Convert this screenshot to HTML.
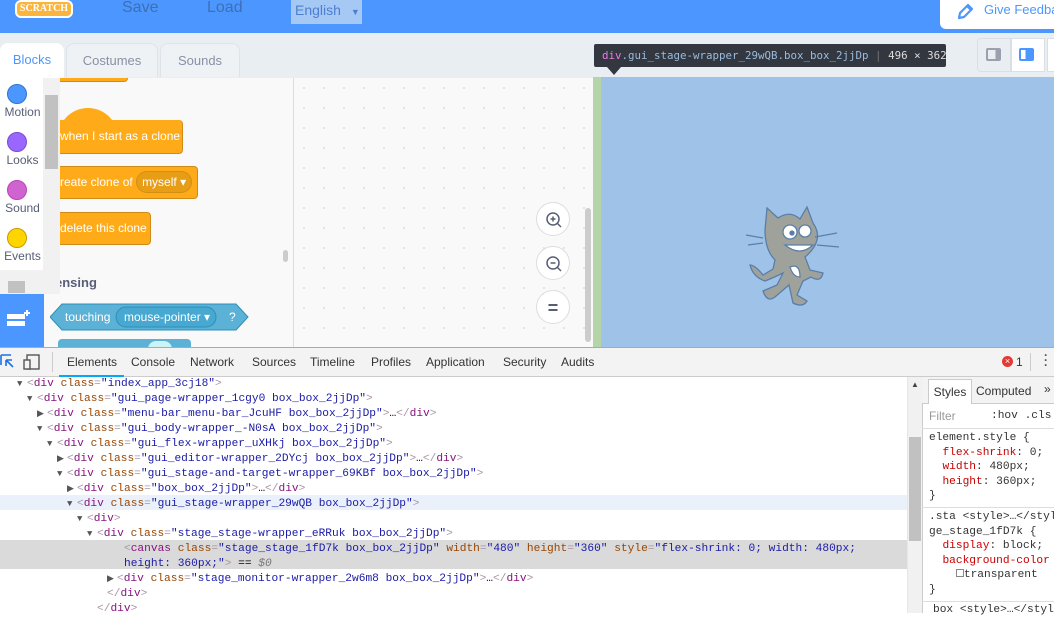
<!DOCTYPE html>
<html><head><meta charset="utf-8"><style>
*{margin:0;padding:0;box-sizing:border-box}
body{width:1054px;height:613px;overflow:hidden;position:relative;font-family:"Liberation Sans",sans-serif;background:#fff}
.a{position:absolute}
.code{font-family:"Liberation Mono",monospace;font-size:11.2px;line-height:15px;white-space:nowrap}
.t{color:#881280}.n{color:#994500}.v{color:#1a1aa6}.p{color:#a894a6}
.tri{display:inline-block;width:10px;color:#555;font-size:9px}
.blk{position:absolute;background:#ffab19;border:1px solid #cf8b17;border-radius:4px;color:#fff;font-size:12px;line-height:30px;padding-left:4px;white-space:nowrap}
.cat{position:absolute;left:7px;width:20px;height:20px;border-radius:50%}
.cl{position:absolute;left:0;width:45px;text-align:center;font-size:12px;color:#575e75}
.zb{position:absolute;left:536px;width:34px;height:34px;border-radius:50%;background:#fff;border:1px solid #ddd}
.dt{font-family:"Liberation Sans",sans-serif;font-size:12px;color:#333;position:absolute;top:355px}
</style></head><body>
<div class="a" style="left:0;top:0;width:1054px;height:33px;background:#4c97ff"></div>
<div class="a" style="left:15px;top:0;width:58px;height:18px;background:#fbb53c;border:2px solid #fff;border-radius:6px;color:#fff;font-size:10px;font-weight:bold;text-align:center;line-height:14px;font-family:'Liberation Serif',serif">SCRATCH</div>
<div class="a" style="left:122px;top:-1px;font-size:16px;color:#3d6fb5">Save</div>
<div class="a" style="left:207px;top:-1px;font-size:16px;color:#3d6fb5">Load</div>
<div class="a" style="left:291px;top:0;width:71px;height:24px;background:#a6c8f5;color:#4c7fd0;font-size:14px;line-height:20px;padding-left:4px">English <span style="font-size:9px;margin-left:6px;color:#4c7fd0">▼</span></div>
<div class="a" style="left:940px;top:0;width:120px;height:29px;background:#fff;border-radius:0 0 0 6px"></div>
<svg class="a" style="left:955px;top:2px" width="20" height="20" viewBox="0 0 20 20"><path d="M4 16 L5 11 L13 3 L17 7 L9 15 Z M12 4 L16 8" fill="none" stroke="#4c97ff" stroke-width="2.2" stroke-linejoin="round"/></svg>
<div class="a" style="left:984px;top:2px;font-size:13px;color:#4c97ff;white-space:nowrap">Give Feedback</div>
<div class="a" style="left:0;top:33px;width:1054px;height:45px;background:#e9eef2"></div>
<div class="a" style="left:0;top:43px;width:64px;height:36px;background:#fff;border-radius:8px 8px 0 0;color:#4c97ff;font-size:13px;text-align:center;line-height:34px">Blocks</div>
<div class="a" style="left:66px;top:43px;width:92px;height:34px;background:#eef2f5;border:1px solid #dde3e8;border-bottom:none;border-radius:8px 8px 0 0;color:#8a90a6;font-size:13px;text-align:center;line-height:34px">Costumes</div>
<div class="a" style="left:160px;top:43px;width:80px;height:34px;background:#eef2f5;border:1px solid #dde3e8;border-bottom:none;border-radius:8px 8px 0 0;color:#8a90a6;font-size:13px;text-align:center;line-height:34px">Sounds</div>
<div class="a" style="left:594px;top:44px;width:352px;height:23px;background:#333740;border-radius:2px;font-family:'DejaVu Sans Mono',monospace;font-size:10.8px;line-height:23px;color:#9bbbdc;padding-left:8px;white-space:nowrap;overflow:hidden"><span style="color:#ee78e6">div</span>.gui_stage-wrapper_29wQB.box_box_2jjDp <span style="color:#777">|</span> <span style="color:#ddd">496 × 362</span></div>
<div class="a" style="left:607px;top:67px;width:0;height:0;border-left:7px solid transparent;border-right:7px solid transparent;border-top:8px solid #333740"></div>
<div class="a" style="left:977px;top:38px;width:34px;height:34px;background:#e9eef2;border:1px solid #d9dfe5;border-radius:4px 0 0 4px"></div>
<div class="a" style="left:986px;top:48px;width:15px;height:13px;border:2px solid #9aa0ae;border-radius:2px;background:linear-gradient(90deg,#e9eef2 70%,#9aa0ae 70%)"></div>
<div class="a" style="left:1011px;top:38px;width:34px;height:34px;background:#fff;border:1px solid #d9dfe5"></div>
<div class="a" style="left:1019px;top:48px;width:15px;height:13px;border:2px solid #4c97ff;border-radius:2px;background:linear-gradient(90deg,#fff 40%,#4c97ff 40%)"></div>
<div class="a" style="left:1047px;top:38px;width:10px;height:34px;background:#fff;border:1px solid #d9dfe5"></div>
<div class="a" style="left:0;top:78px;width:593px;height:270px;background:#f9f9f9;overflow:hidden">
<div class="a" style="left:293px;top:0;width:300px;height:270px;background-color:#f9f9f9;background-image:radial-gradient(#ddd 0.8px,transparent 1px);background-size:20px 20px;border-left:1px solid #ddd"></div>
<div class="blk" style="left:55px;top:-18px;width:73px;height:22px"></div>
<div class="a" style="left:58px;top:30px;width:60px;height:30px;background:#ffab19;border-radius:30px 30px 0 0"></div>
<div class="blk" style="left:55px;top:42px;width:128px;height:34px;padding-top:1px;border-top:none">when I start as a clone</div>
<div class="blk" style="left:55px;top:88px;width:143px;height:33px">reate clone of <span style="display:inline-block;background:#e79d15;border:1px solid #d48e12;border-radius:12px;line-height:20px;padding:0 5px">myself ▾</span></div>
<div class="blk" style="left:55px;top:134px;width:96px;height:33px">delete this clone</div>
<div class="a" style="left:55px;top:197px;font-size:13px;font-weight:bold;color:#575e75">ensing</div>
<svg class="a" style="left:50px;top:225px" width="200" height="28"><polygon points="0,14 12,1 186,1 198,14 186,27 12,27" fill="#5cb1d6" stroke="#2e8eb8"/><rect x="66" y="4" width="100" height="20" rx="10" fill="#47a8d1" stroke="#2e8eb8"/></svg>
<div class="a" style="left:65px;top:232px;font-size:12px;color:#fff">touching</div>
<div class="a" style="left:124px;top:232px;font-size:12px;color:#fff">mouse-pointer ▾</div>
<div class="a" style="left:229px;top:232px;font-size:12px;color:#fff">?</div>
<div class="a" style="left:58px;top:261px;width:133px;height:10px;background:#5cb1d6;border-radius:4px 4px 0 0"></div>
<div class="a" style="left:148px;top:263px;width:24px;height:8px;background:#ccf4f4;border-radius:8px 8px 0 0"></div>
</div>
<div class="a" style="left:0;top:78px;width:60px;height:216px;background:#fff;border-right:1px solid #ddd"></div>
<div class="cat" style="top:84px;background:#4c97ff;border:1px solid #3373cc"></div><div class="cl" style="top:105px">Motion</div>
<div class="cat" style="top:132px;background:#9966ff;border:1px solid #774dcb"></div><div class="cl" style="top:153px">Looks</div>
<div class="cat" style="top:180px;background:#cf63cf;border:1px solid #bd42bd"></div><div class="cl" style="top:201px">Sound</div>
<div class="cat" style="top:228px;background:#ffd500;border:1px solid #cc9900"></div><div class="cl" style="top:249px">Events</div>
<div class="a" style="left:43px;top:78px;width:17px;height:192px;background:#f1f1f1"></div>
<div class="a" style="left:45px;top:95px;width:13px;height:74px;background:#c1c1c1"></div>
<div class="a" style="left:0;top:270px;width:60px;height:24px;background:#f1f1f1"></div>
<div class="a" style="left:8px;top:281px;width:17px;height:12px;background:#c1c1c1"></div>
<div class="a" style="left:0;top:294px;width:44px;height:54px;background:#4c97ff"></div>
<svg class="a" style="left:6px;top:309px" width="24" height="20"><rect x="1" y="5" width="18" height="5" fill="#fff"/><rect x="1" y="12" width="18" height="5" fill="#fff"/><path d="M21 1v6M18 4h6" stroke="#fff" stroke-width="2"/></svg>
<div class="zb" style="top:202px"></div><div class="zb" style="top:246px"></div><div class="zb" style="top:290px"></div>
<svg class="a" style="left:544px;top:210px" width="20" height="120" fill="none" stroke="#575e75" stroke-width="1.5"><circle cx="9" cy="9" r="6"/><path d="M13 13l4 4M9 6.5v5M6.5 9h5"/><circle cx="9" cy="53" r="6"/><path d="M13 57l4 4M6.5 53h5"/><path d="M4.5 95h9M4.5 100h9" stroke-width="2"/></svg>
<div class="a" style="left:585px;top:208px;width:6px;height:134px;background:#ccc;border-radius:3px"></div>
<div class="a" style="left:283px;top:250px;width:5px;height:12px;background:#ccc;border-radius:3px"></div>
<div class="a" style="left:593px;top:77px;width:8px;height:271px;background:#b5d4a8"></div>
<div class="a" style="left:601px;top:77px;width:453px;height:271px;background:#9fc3e8"></div>
<svg class="a" style="left:745px;top:205px" width="100" height="105" viewBox="0 0 100 105"><g stroke="#5a7ea8" stroke-width="1.3"><path d="M20 25 L22 3 L33 13 Q45 5 55 14 L62 2 L68 18 Q80 35 60 52 L65 65 L78 68 Q76 78 66 72 L58 76 L52 90 L62 96 Q58 103 48 98 L44 80 L30 92 Q22 98 18 86 L32 80 L38 68 Q30 72 20 76 Q8 72 5 60 Q10 60 18 70 L28 64 L30 55 Q20 45 20 25Z" fill="#9ea29a"/><circle cx="45" cy="27" r="7" fill="#fff"/><circle cx="60" cy="26" r="6" fill="#fff"/><circle cx="47" cy="28" r="2" fill="#5a7ea8"/><path d="M40 40 Q55 52 68 40 Z" fill="#fff"/><path d="M45 62 Q55 58 55 72 Q48 72 45 62Z" fill="#fff"/><path d="M1 30 L18 33 M3 40 L18 38 M70 32 L92 28 M72 40 L94 42" fill="none"/></g></svg>
<div class="a" style="left:0;top:347px;width:1054px;height:1px;background:#aaa"></div>
<div class="a" style="left:0;top:348px;width:1054px;height:29px;background:#f3f3f3;border-bottom:1px solid #ccc"></div>
<svg class="a" style="left:0;top:353px" width="44" height="18"><path d="M1 2h10M1 2v10M6 7l7 7M6 7h6M6 7v6" stroke="#1a73e8" stroke-width="1.6" fill="none"/><rect x="27" y="2" width="12" height="14" stroke="#555" fill="none" stroke-width="1.4"/><rect x="24" y="7" width="6" height="9" stroke="#555" fill="#f3f3f3" stroke-width="1.4"/></svg>
<div class="a" style="left:52px;top:352px;width:1px;height:20px;background:#ccc"></div>
<div class="a" style="left:59px;top:375px;width:65px;height:2px;background:#03a9f4"></div>
<div class="dt" style="left:67px">Elements</div><div class="dt" style="left:131px">Console</div><div class="dt" style="left:190px">Network</div><div class="dt" style="left:252px">Sources</div><div class="dt" style="left:310px">Timeline</div><div class="dt" style="left:371px">Profiles</div><div class="dt" style="left:426px">Application</div><div class="dt" style="left:503px">Security</div><div class="dt" style="left:561px">Audits</div>
<div class="a" style="left:1002px;top:356px;width:11px;height:11px;border-radius:50%;background:#e53935;color:#fff;font-size:9px;line-height:11px;text-align:center">×</div>
<div class="dt" style="left:1016px;color:#333">1</div>
<div class="a" style="left:1030px;top:353px;width:1px;height:18px;background:#ccc"></div>
<div class="a" style="left:1044px;top:353px;width:3px;line-height:5px;font-size:12px;font-weight:bold;color:#555">·<br>·<br>·</div>
<div class="a" style="left:0;top:495px;width:907px;height:15px;background:#eaf1fb"></div>
<div class="a" style="left:0;top:540px;width:907px;height:29px;background:#dadada"></div>
<div class="a code" style="left:0;top:377px;width:907px">
<div style="padding-left:17px"><span class="tri">▼</span><span class="p">&lt;</span><span class="t">div</span> <span class="n">class</span><span class="p">=</span><span class="v">"index_app_3cj18"</span><span class="p">&gt;</span></div>
<div style="padding-left:27px"><span class="tri">▼</span><span class="p">&lt;</span><span class="t">div</span> <span class="n">class</span><span class="p">=</span><span class="v">"gui_page-wrapper_1cgy0 box_box_2jjDp"</span><span class="p">&gt;</span></div>
<div style="padding-left:37px"><span class="tri">▶</span><span class="p">&lt;</span><span class="t">div</span> <span class="n">class</span><span class="p">=</span><span class="v">"menu-bar_menu-bar_JcuHF box_box_2jjDp"</span><span class="p">&gt;</span>…<span class="p">&lt;/</span><span class="t">div</span><span class="p">&gt;</span></div>
<div style="padding-left:37px"><span class="tri">▼</span><span class="p">&lt;</span><span class="t">div</span> <span class="n">class</span><span class="p">=</span><span class="v">"gui_body-wrapper_-N0sA box_box_2jjDp"</span><span class="p">&gt;</span></div>
<div style="padding-left:47px"><span class="tri">▼</span><span class="p">&lt;</span><span class="t">div</span> <span class="n">class</span><span class="p">=</span><span class="v">"gui_flex-wrapper_uXHkj box_box_2jjDp"</span><span class="p">&gt;</span></div>
<div style="padding-left:57px"><span class="tri">▶</span><span class="p">&lt;</span><span class="t">div</span> <span class="n">class</span><span class="p">=</span><span class="v">"gui_editor-wrapper_2DYcj box_box_2jjDp"</span><span class="p">&gt;</span>…<span class="p">&lt;/</span><span class="t">div</span><span class="p">&gt;</span></div>
<div style="padding-left:57px"><span class="tri">▼</span><span class="p">&lt;</span><span class="t">div</span> <span class="n">class</span><span class="p">=</span><span class="v">"gui_stage-and-target-wrapper_69KBf box_box_2jjDp"</span><span class="p">&gt;</span></div>
<div style="padding-left:67px"><span class="tri">▶</span><span class="p">&lt;</span><span class="t">div</span> <span class="n">class</span><span class="p">=</span><span class="v">"box_box_2jjDp"</span><span class="p">&gt;</span>…<span class="p">&lt;/</span><span class="t">div</span><span class="p">&gt;</span></div>
<div style="padding-left:67px"><span class="tri">▼</span><span class="p">&lt;</span><span class="t">div</span> <span class="n">class</span><span class="p">=</span><span class="v">"gui_stage-wrapper_29wQB box_box_2jjDp"</span><span class="p">&gt;</span></div>
<div style="padding-left:77px"><span class="tri">▼</span><span class="p">&lt;</span><span class="t">div</span><span class="p">&gt;</span></div>
<div style="padding-left:87px"><span class="tri">▼</span><span class="p">&lt;</span><span class="t">div</span> <span class="n">class</span><span class="p">=</span><span class="v">"stage_stage-wrapper_eRRuk box_box_2jjDp"</span><span class="p">&gt;</span></div>
<div style="padding-left:124px;white-space:normal;width:907px"><span class="p">&lt;</span><span class="t">canvas</span> <span class="n">class</span><span class="p">=</span><span class="v">"stage_stage_1fD7k box_box_2jjDp"</span> <span class="n">width</span><span class="p">=</span><span class="v">"480"</span> <span class="n">height</span><span class="p">=</span><span class="v">"360"</span> <span class="n">style</span><span class="p">=</span><span class="v">"flex-shrink: 0; width: 480px; height: 360px;"</span><span class="p">&gt;</span> == <i style="color:#777">$0</i></div>
<div style="padding-left:107px"><span class="tri">▶</span><span class="p">&lt;</span><span class="t">div</span> <span class="n">class</span><span class="p">=</span><span class="v">"stage_monitor-wrapper_2w6m8 box_box_2jjDp"</span><span class="p">&gt;</span>…<span class="p">&lt;/</span><span class="t">div</span><span class="p">&gt;</span></div>
<div style="padding-left:107px"><span class="p">&lt;/</span><span class="t">div</span><span class="p">&gt;</span></div>
<div style="padding-left:97px"><span class="p">&lt;/</span><span class="t">div</span><span class="p">&gt;</span></div>
</div>
<div class="a" style="left:907px;top:377px;width:15px;height:236px;background:#f1f1f1;border-left:1px solid #e6e6e6"></div>
<div class="a" style="left:911px;top:380px;font-size:8px;color:#444">▲</div>
<div class="a" style="left:909px;top:437px;width:12px;height:104px;background:#c1c1c1"></div>
<div class="a" style="left:922px;top:377px;width:132px;height:236px;background:#fff;border-left:1px solid #ccc"></div>
<div class="a" style="left:922px;top:377px;width:132px;height:27px;background:#f3f3f3;border-bottom:1px solid #ccc"></div>
<div class="a" style="left:928px;top:379px;width:44px;height:25px;background:#fff;border:1px solid #ccc;border-bottom:none;font-size:12px;line-height:24px;text-align:center;color:#333">Styles</div>
<div class="a" style="left:976px;top:384px;font-size:12px;color:#333">Computed</div>
<div class="a" style="left:1044px;top:382px;font-size:12px;color:#333">»</div>
<div class="a" style="left:929px;top:409px;font-size:12px;color:#999">Filter</div>
<div class="a code" style="left:991px;top:409px;color:#333">:hov .cls</div>
<div class="a" style="left:922px;top:428px;width:132px;height:1px;background:#ddd"></div>
<div class="a code" style="left:929px;top:431px;color:#333;line-height:14.5px">element.style {<br>&nbsp;&nbsp;<span style="color:#c80000">flex-shrink</span>: 0;<br>&nbsp;&nbsp;<span style="color:#c80000">width</span>: 480px;<br>&nbsp;&nbsp;<span style="color:#c80000">height</span>: 360px;<br>}</div>
<div class="a" style="left:922px;top:507px;width:132px;height:1px;background:#ddd"></div>
<div class="a code" style="left:929px;top:510px;color:#333;line-height:14.5px">.sta &lt;style&gt;…&lt;/styl<br>ge_stage_1fD7k {<br>&nbsp;&nbsp;<span style="color:#c80000">display</span>: block;<br>&nbsp;&nbsp;<span style="color:#c80000">background-color</span><br>&nbsp;&nbsp;&nbsp;&nbsp;<span style="display:inline-block;width:8px;height:8px;border:1px solid #888"></span>transparent<br>}</div>
<div class="a" style="left:922px;top:601px;width:132px;height:1px;background:#ddd"></div>
<div class="a code" style="left:933px;top:603px;color:#333">box &lt;style&gt;…&lt;/styl</div>
</body></html>
